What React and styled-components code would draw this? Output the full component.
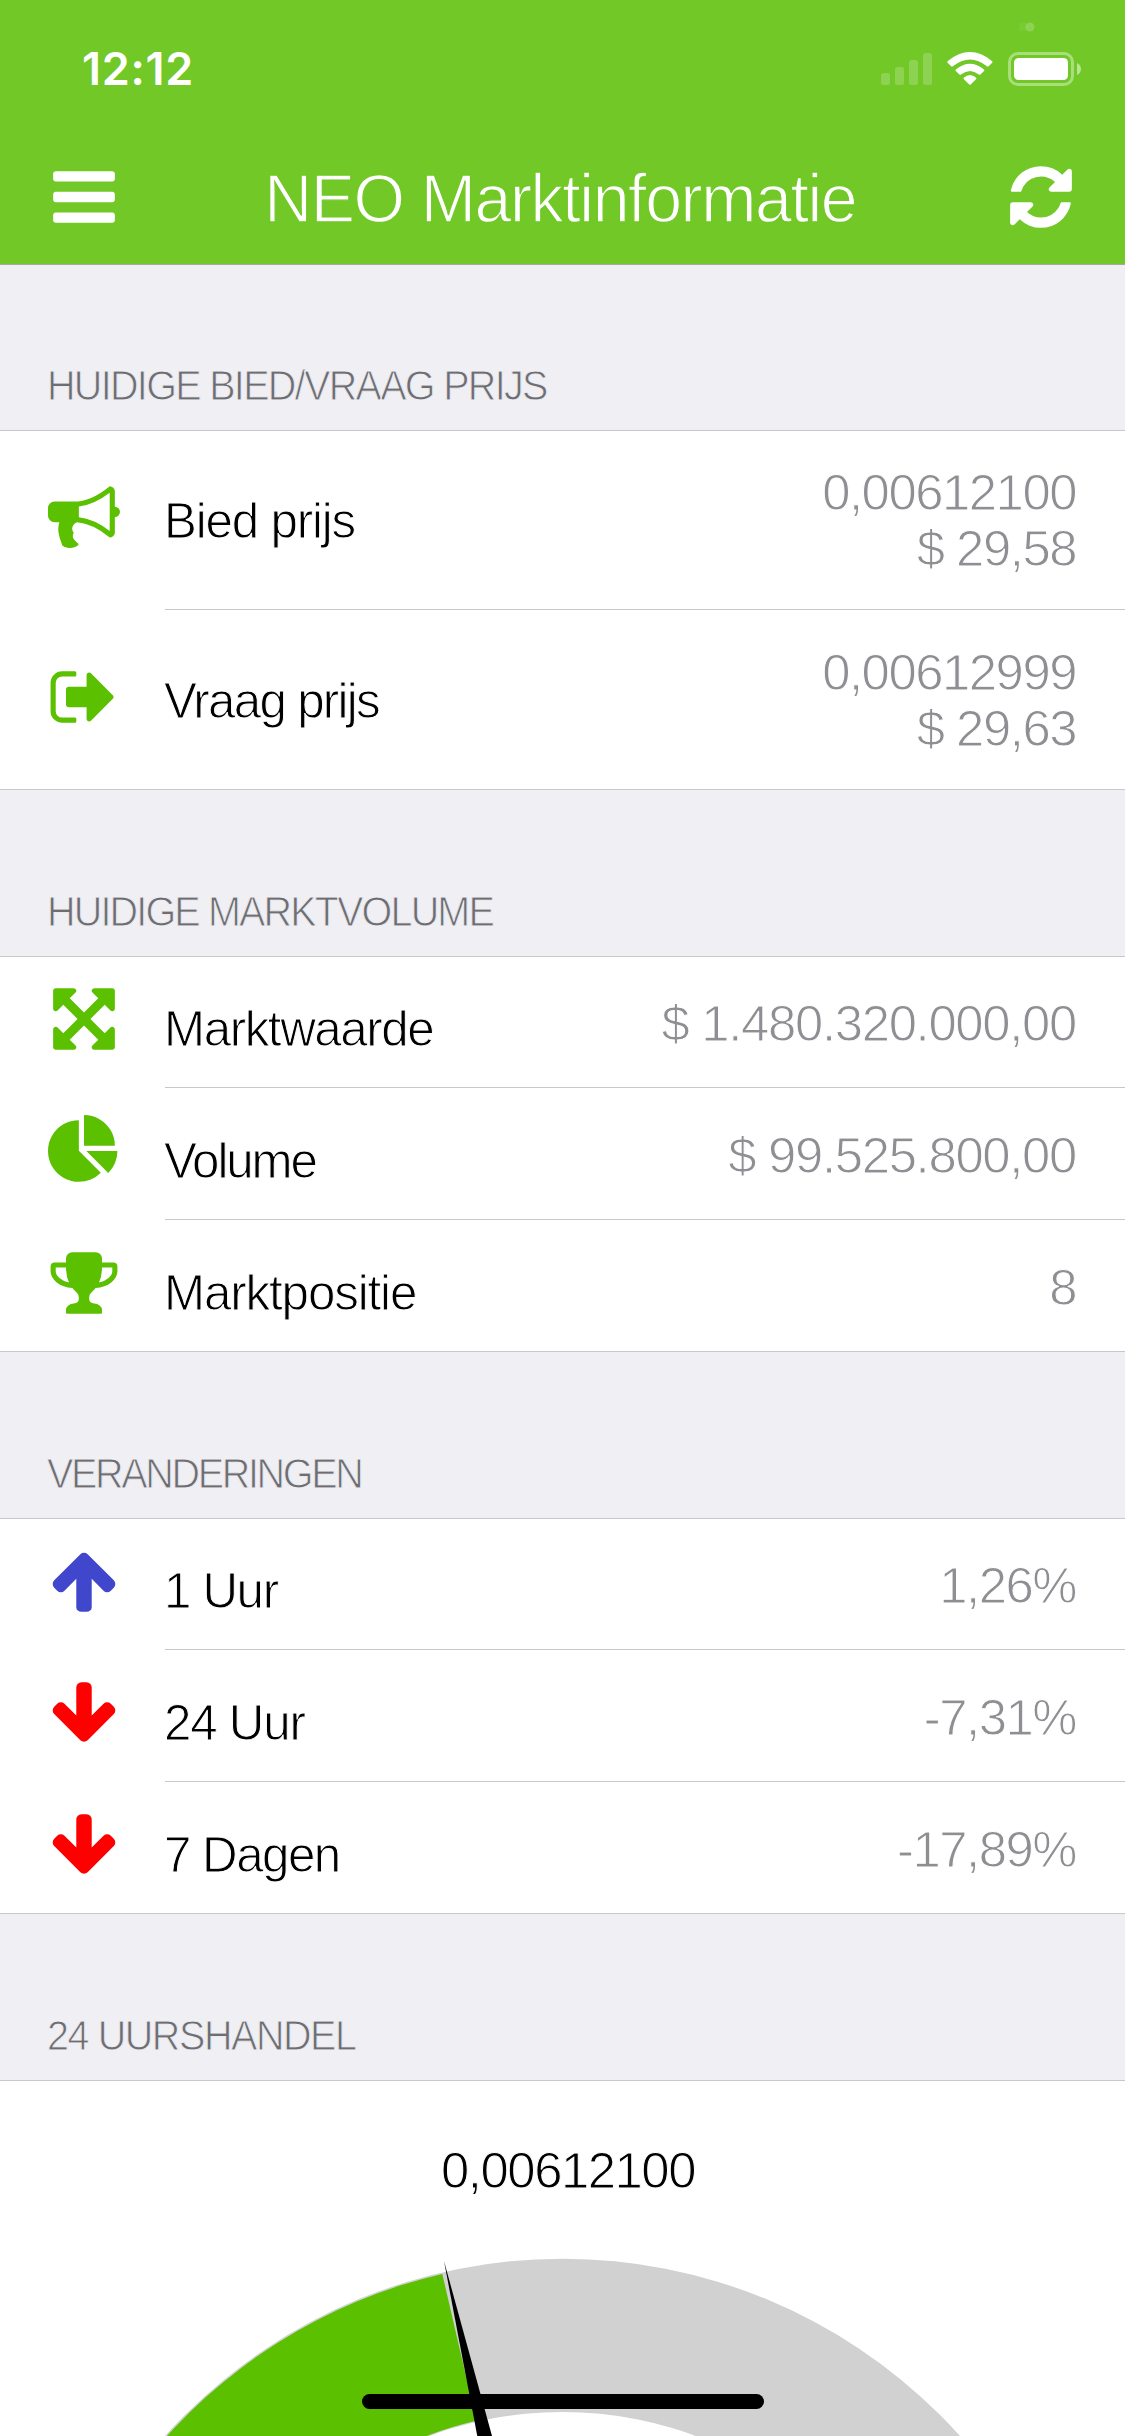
import React from "react";
import styled, { createGlobalStyle } from "styled-components";

const color = {
  bar: "#71c826",
  accent: "#5ac000",
  canvas: "#efeff4",
  cell: "#ffffff",
  line: "#c8c7cc",
  heading: "#6d6d72",
  value: "#8e8e93",
  up: "#4147cd",
  down: "#ff0000",
};

const GlobalStyle = createGlobalStyle`
  *, *::before, *::after { box-sizing: border-box; }
  body { margin: 0; background: ${color.canvas}; }
`;

const Screen = styled.div`
  position: relative;
  width: 1125px;
  height: 2436px;
  overflow: hidden;
  background: ${color.canvas};
  font-family: "Liberation Sans", Arial, sans-serif;
`;

/* Light weight: a stroke in the surface colour trims the glyph outlines. */
const LightText = styled.span`
  display: block;
  white-space: nowrap;
  font-weight: 400;
  letter-spacing: ${(p) => p.$track ?? 0}px;
  transform: scaleX(${(p) => p.$stretch ?? 1});
  transform-origin: ${(p) => p.$origin ?? "left"} center;
  -webkit-text-stroke: ${(p) => p.$trim ?? 1}px ${(p) => p.$surface ?? color.cell};
`;

const Header = styled.header`
  height: 265px;
  background: ${color.bar};
  border-bottom: 1px solid #a7a7aa;
`;

const StatusBar = styled.div`
  display: flex;
  justify-content: space-between;
  height: 158px;
  padding-left: 82px;
`;

const Clock = styled.div`
  padding-top: 41px;
  font: 600 45px/56px Inter, "Liberation Sans", sans-serif;
  letter-spacing: 0.7px;
  color: #fff;
`;

const StatusIcons = styled.svg`
  display: block;
  width: 265px;
  height: 110px;
`;

const NavBar = styled.div`
  display: grid;
  grid-template-columns: 72px 1fr 72px;
  padding: 3px 48px 0;
`;

const Title = styled.h1`
  margin: -2px 0 0;
  padding-right: 4px;
  display: flex;
  justify-content: center;
`;

const TitleText = styled(LightText)`
  font-size: 69px;
  line-height: 80px;
  color: #fff;
`;

const GlyphSvg = styled.svg`
  display: block;
  width: 72px;
  height: 72px;
  fill: ${(p) => p.$fill};
`;

const SectionHeading = styled.h2`
  margin: 0;
  display: flex;
  align-items: flex-end;
  height: ${(p) => (p.$first ? 165 : 166)}px;
  padding: 0 0 20px 47px;
`;

const HeadingText = styled(LightText)`
  font-size: 42px;
  line-height: 48px;
  color: ${color.heading};
`;

const Group = styled.section`
  background: ${color.cell};
  box-shadow: inset 0 1px 0 ${color.line}, inset 0 -1px 0 ${color.line};
`;

const Row = styled.div`
  display: flex;
  height: ${(p) => (p.$tall ? 180 : 132)}px;
  padding-left: 48px;
`;

const IconCell = styled.div`
  width: 117px;
  padding-top: ${(p) => (p.$tall ? 51 : 27)}px;
`;

const RowBody = styled.div`
  flex: 1;
  display: flex;
  justify-content: space-between;
  padding-right: 49px;
  border-bottom: 1px solid ${color.line};
`;

const Label = styled.div`
  padding-top: ${(p) => (p.$tall ? 63 : 45)}px;
  margin-left: -1px;
`;

const LabelText = styled(LightText)`
  font-size: 50.8px;
  line-height: 56px;
  color: #000;
`;

const Values = styled.div`
  display: flex;
  flex-direction: column;
  align-items: flex-end;
  padding-top: ${(p) => (p.$tall ? 35 : 40)}px;
`;

const ValueText = styled(LightText)`
  font-size: 50.8px;
  line-height: 56px;
  color: ${color.value};
`;

const GaugePanel = styled.section`
  display: flex;
  flex-direction: column;
  justify-content: space-between;
  height: 356px;
  background: ${color.cell};
  border-top: 1px solid ${color.line};
`;

const GaugeValue = styled.div`
  display: flex;
  justify-content: center;
  padding: 62px 0 0 11px;
`;

const GaugeText = styled(LightText)`
  font-size: 50.8px;
  line-height: 56px;
  color: #000;
`;

const GaugeSvg = styled.svg`
  display: block;
  width: 1125px;
  height: 236px;
`;

const HomeIndicator = styled.div`
  position: absolute;
  left: 362px;
  bottom: 27px;
  width: 402px;
  height: 15px;
  border-radius: 8px;
  background: #000;
`;

const glyphs = {
  bars: "M1664 1344v128q0 26-19 45t-45 19h-1408q-26 0-45-19t-19-45v-128q0-26 19-45t45-19h1408q26 0 45 19t19 45zm0-512v128q0 26-19 45t-45 19h-1408q-26 0-45-19t-19-45v-128q0-26 19-45t45-19h1408q26 0 45 19t19 45zm0-512v128q0 26-19 45t-45 19h-1408q-26 0-45-19t-19-45v-128q0-26 19-45t45-19h1408q26 0 45 19t19 45z",
  refresh:
    "M1639 1056q0 5-1 7-64 268-268 434.5t-478 166.5q-146 0-282.5-55t-243.5-157l-129 129q-19 19-45 19t-45-19-19-45v-448q0-26 19-45t45-19h448q26 0 45 19t19 45-19 45l-137 137q71 66 161 102t187 36q134 0 250-65t186-179q11-17 53-117 8-23 30-23h192q13 0 22.5 9.5t9.5 22.5zm25-800v448q0 26-19 45t-45 19h-448q-26 0-45-19t-19-45 19-45l138-138q-148-137-349-137-134 0-250 65t-186 179q-11 17-53 117-8 23-30 23h-199q-13 0-22.5-9.5t-9.5-22.5v-7q65-268 270-434.5t480-166.5q146 0 284 55.5t245 156.5l130-129q19-19 45-19t45 19 19 45z",
  bullhorn:
    "M1664 640q53 0 90.5 37.5t37.5 90.5-37.5 90.5-90.5 37.5v384q0 52-38 90t-90 38q-417-347-812-380-58 19-91 66t-31 100.5 40 92.5q-20 33-23 65.5t6 58 33.5 55 48 50 61.5 50.5q-29 58-111.5 83t-168.5 11.5-132-55.5q-7-23-29.5-87.5t-32-94.5-23-89-15-101 3.5-98.5 22-110.5h-122q-66 0-113-47t-47-113v-192q0-66 47-113t113-47h480q435 0 896-384 52 0 90 38t38 90v384zm-128 604v-954q-394 302-768 343v270q377 42 768 341z",
  signOut:
    "M704 1440q0 4 1 20t.5 26.5-3 23.5-10 19.5-20.5 6.5h-320q-119 0-203.5-84.5t-84.5-203.5v-704q0-119 84.5-203.5t203.5-84.5h320q13 0 22.5 9.5t9.5 22.5q0 4 1 20t.5 26.5-3 23.5-10 19.5-20.5 6.5h-320q-66 0-113 47t-47 113v704q0 66 47 113t113 47h312l11.5 1 11.5 3 8 5.5 7 9 2 13.5zm928-544q0 26-19 45l-544 544q-19 19-45 19t-45-19-19-45v-288h-448q-26 0-45-19t-19-45v-384q0-26 19-45t45-19h448v-288q0-26 19-45t45-19 45 19l544 544q19 19 19 45z",
  arrowsAlt:
    "M1411 541l-355 355 355 355 144-144q29-31 70-14 39 17 39 59v448q0 26-19 45t-45 19h-448q-42 0-59-40-17-39 14-69l144-144-355-355-355 355 144 144q31 30 14 69-17 40-59 40h-448q-26 0-45-19t-19-45v-448q0-42 40-59 39-17 69 14l144 144 355-355-355-355-144 144q-19 19-45 19-12 0-24-5-40-17-40-59v-448q0-26 19-45t45-19h448q42 0 59 40 17 39-14 69l-144 144 355 355 355-355-144-144q-31-30-14-69 17-40 59-40h448q26 0 45 19t19 45v448q0 42-39 59-13 5-25 5-26 0-45-19z",
  pieChart:
    "M768 890l546 546q-106 108-247.5 168t-298.5 60q-209 0-385.5-103t-279.5-279.5-103-385.5 103-385.5 279.5-279.5 385.5-103v762zm187 6h773q0 157-60 298.5t-168 247.5zm709-128h-768v-768q209 0 385.5 103t279.5 279.5 103 385.5z",
  trophy:
    "M522 883q-74-162-74-371h-256v96q0 78 94.5 162t235.5 113zm1078-275v-96h-256q0 209-74 371 141-29 235.5-113t94.5-162zm128-128v128q0 71-41.5 143t-112 130-173 97.5-215.5 44.5q-42 54-95 95-38 34-52.5 72.5t-14.5 89.5q0 54 30.5 91t97.5 37q75 0 133.5 45.5t58.5 114.5v64q0 14-9 23t-23 9h-832q-14 0-23-9t-9-23v-64q0-69 58.5-114.5t133.5-45.5q67 0 97.5-37t30.5-91q0-51-14.5-89.5t-52.5-72.5q-53-41-95-95-113-5-215.5-44.5t-173-97.5-112-130-41.5-143v-128q0-40 28-68t68-28h288v-96q0-66 47-113t113-47h576q66 0 113 47t47 113v96h288q40 0 68 28t28 68z",
  arrowUp:
    "M1675 971q0 51-37 90l-75 75q-38 38-91 38-54 0-90-38l-294-293v704q0 52-37.5 84.5t-90.5 32.5h-128q-53 0-90.5-32.5t-37.5-84.5v-704l-294 293q-36 38-90 38t-90-38l-75-75q-38-38-38-90 0-53 38-91l651-651q35-37 90-37 54 0 91 37l651 651q37 39 37 91z",
  arrowDown:
    "M1675 832q0 53-37 90l-651 652q-39 37-91 37-53 0-90-37l-651-652q-38-36-38-90 0-53 38-91l74-75q39-37 91-37 53 0 90 37l294 294v-704q0-52 38-90t90-38h128q52 0 90 38t38 90v704l294-294q37-37 90-37 52 0 91 37l75 75q37 39 37 91z",
};

const Glyph = ({ name, fill = color.accent }) => (
  <GlyphSvg viewBox="0 0 1792 1792" $fill={fill} aria-hidden="true">
    <path d={glyphs[name]} />
  </GlyphSvg>
);

const sections = [
  {
    title: "HUIDIGE BIED/VRAAG PRIJS",
    track: -1.77,
    tall: true,
    rows: [
      { icon: "bullhorn", label: "Bied prijs", track: -1.2, values: ["0,00612100", "$ 29,58"] },
      { icon: "signOut", label: "Vraag prijs", track: -1.75, values: ["0,00612999", "$ 29,63"] },
    ],
  },
  {
    title: "HUIDIGE MARKTVOLUME",
    track: -1.93,
    rows: [
      { icon: "arrowsAlt", label: "Marktwaarde", track: -1.45, valueTrack: -1.3, values: ["$ 1.480.320.000,00"] },
      { icon: "pieChart", label: "Volume", track: -2.15, valueTrack: -1.3, values: ["$ 99.525.800,00"] },
      { icon: "trophy", label: "Marktpositie", track: -1.15, values: ["8"] },
    ],
  },
  {
    title: "VERANDERINGEN",
    track: -2.45,
    rows: [
      { icon: "arrowUp", fill: color.up, label: "1 Uur", track: -1.4, values: ["1,26%"] },
      { icon: "arrowDown", fill: color.down, label: "24 Uur", track: -1.25, values: ["-7,31%"] },
      { icon: "arrowDown", fill: color.down, label: "7 Dagen", track: -1.55, values: ["-17,89%"] },
    ],
  },
];

const Heading = ({ first, track, children }) => (
  <SectionHeading $first={first}>
    <HeadingText $track={track} $stretch={0.94} $trim={0.9} $surface={color.canvas}>
      {children}
    </HeadingText>
  </SectionHeading>
);

const InfoRow = ({ row, tall }) => (
  <Row $tall={tall}>
    <IconCell $tall={tall}>
      <Glyph name={row.icon} fill={row.fill} />
    </IconCell>
    <RowBody>
      <Label $tall={tall}>
        <LabelText $track={row.track} $stretch={0.97}>
          {row.label}
        </LabelText>
      </Label>
      <Values $tall={tall}>
        {row.values.map((v) => (
          <ValueText key={v} $track={row.valueTrack ?? -1.45} $origin="right">
            {v}
          </ValueText>
        ))}
      </Values>
    </RowBody>
  </Row>
);

const Status = () => (
  <StatusIcons viewBox="860 0 265 110" aria-hidden="true">
    <g fill="#fff" fillOpacity="0.2">
      <rect x="881" y="73" width="9" height="12" rx="2.5" />
      <rect x="895" y="67" width="9" height="18" rx="2.5" />
      <rect x="909" y="60" width="9" height="25" rx="2.5" />
      <rect x="923" y="53" width="9" height="32" rx="2.5" />
      <circle cx="1030" cy="27" r="4.5" />
      <rect x="1019" y="23" width="8" height="8" rx="2" fillOpacity="0.06" />
    </g>
    <g fill="#fff">
      <path d="M947.6 61.2 Q970 43 992.2 61.2 Q993 62 992.2 62.8 L988.6 66.3 Q987.8 67 987 66.3 Q970 52.6 952.8 66.3 Q952 67 951.2 66.3 L947.6 62.8 Q946.8 62 947.6 61.2z" />
      <path d="M955.8 69.4 Q970 58 984 69.4 Q984.8 70.2 984 71 L980.4 74.4 Q979.6 75.1 978.8 74.4 Q970 67.4 961 74.4 Q960.2 75.1 959.4 74.4 L955.8 71 Q955 70.2 955.8 69.4z" />
      <path d="M963.9 77.6 Q970 72.6 976 77.6 Q976.8 78.4 976 79.2 L970.7 84.4 Q970 85.1 969.2 84.4 L963.9 79.2 Q963.1 78.4 963.9 77.6z" />
      <rect x="1014" y="58" width="54" height="22" rx="4.5" />
    </g>
    <rect x="1009.5" y="53.5" width="63" height="31" rx="8.5" fill="none" stroke="#fff" strokeOpacity="0.4" strokeWidth="3" />
    <path d="M1077 63 Q1081 65 1081 69 Q1081 73 1077 75z" fill="#fff" fillOpacity="0.5" />
  </StatusIcons>
);

/* Ring centred at (cx, cy); angles measured from straight up. */
const ring = (cx, cy, outer, inner, from, to) => {
  const at = (r, a) => `${cx + r * Math.sin(a)} ${cy - r * Math.cos(a)}`;
  return `M${at(outer, from)}A${outer} ${outer} 0 0 1 ${at(outer, to)}L${at(inner, to)}A${inner} ${inner} 0 0 0 ${at(inner, from)}z`;
};

const Gauge = () => (
  <GaugeSvg viewBox="0 2200 1125 236" aria-hidden="true">
    <path d={ring(562.5, 2793, 534.3, 381, -1.57, 1.57)} fill="#d1d1d1" />
    <path d={ring(562.5, 2793, 532.8, 382, -1.57, -0.2276)} fill={color.accent} />
    <path d="M444 2261 L492 2436 H477.3z" fill="#000" />
  </GaugeSvg>
);

export default function App() {
  return (
    <>
      <GlobalStyle />
      <Screen>
        <Header>
          <StatusBar>
            <Clock>12:12</Clock>
            <Status />
          </StatusBar>
          <NavBar>
            <Glyph name="bars" fill="#fff" />
            <Title>
              <TitleText $track={-1.45} $stretch={0.96} $origin="center" $trim={1.3} $surface={color.bar}>
                NEO Marktinformatie
              </TitleText>
            </Title>
            <Glyph name="refresh" fill="#fff" />
          </NavBar>
        </Header>
        {sections.map((s, i) => (
          <React.Fragment key={s.title}>
            <Heading first={i === 0} track={s.track}>
              {s.title}
            </Heading>
            <Group>
              {s.rows.map((r) => (
                <InfoRow key={r.label} row={r} tall={s.tall} />
              ))}
            </Group>
          </React.Fragment>
        ))}
        <Heading track={-1.5}>24 UURSHANDEL</Heading>
        <GaugePanel>
          <GaugeValue>
            <GaugeText $track={-1.45}>0,00612100</GaugeText>
          </GaugeValue>
          <Gauge />
        </GaugePanel>
        <HomeIndicator />
      </Screen>
    </>
  );
}
